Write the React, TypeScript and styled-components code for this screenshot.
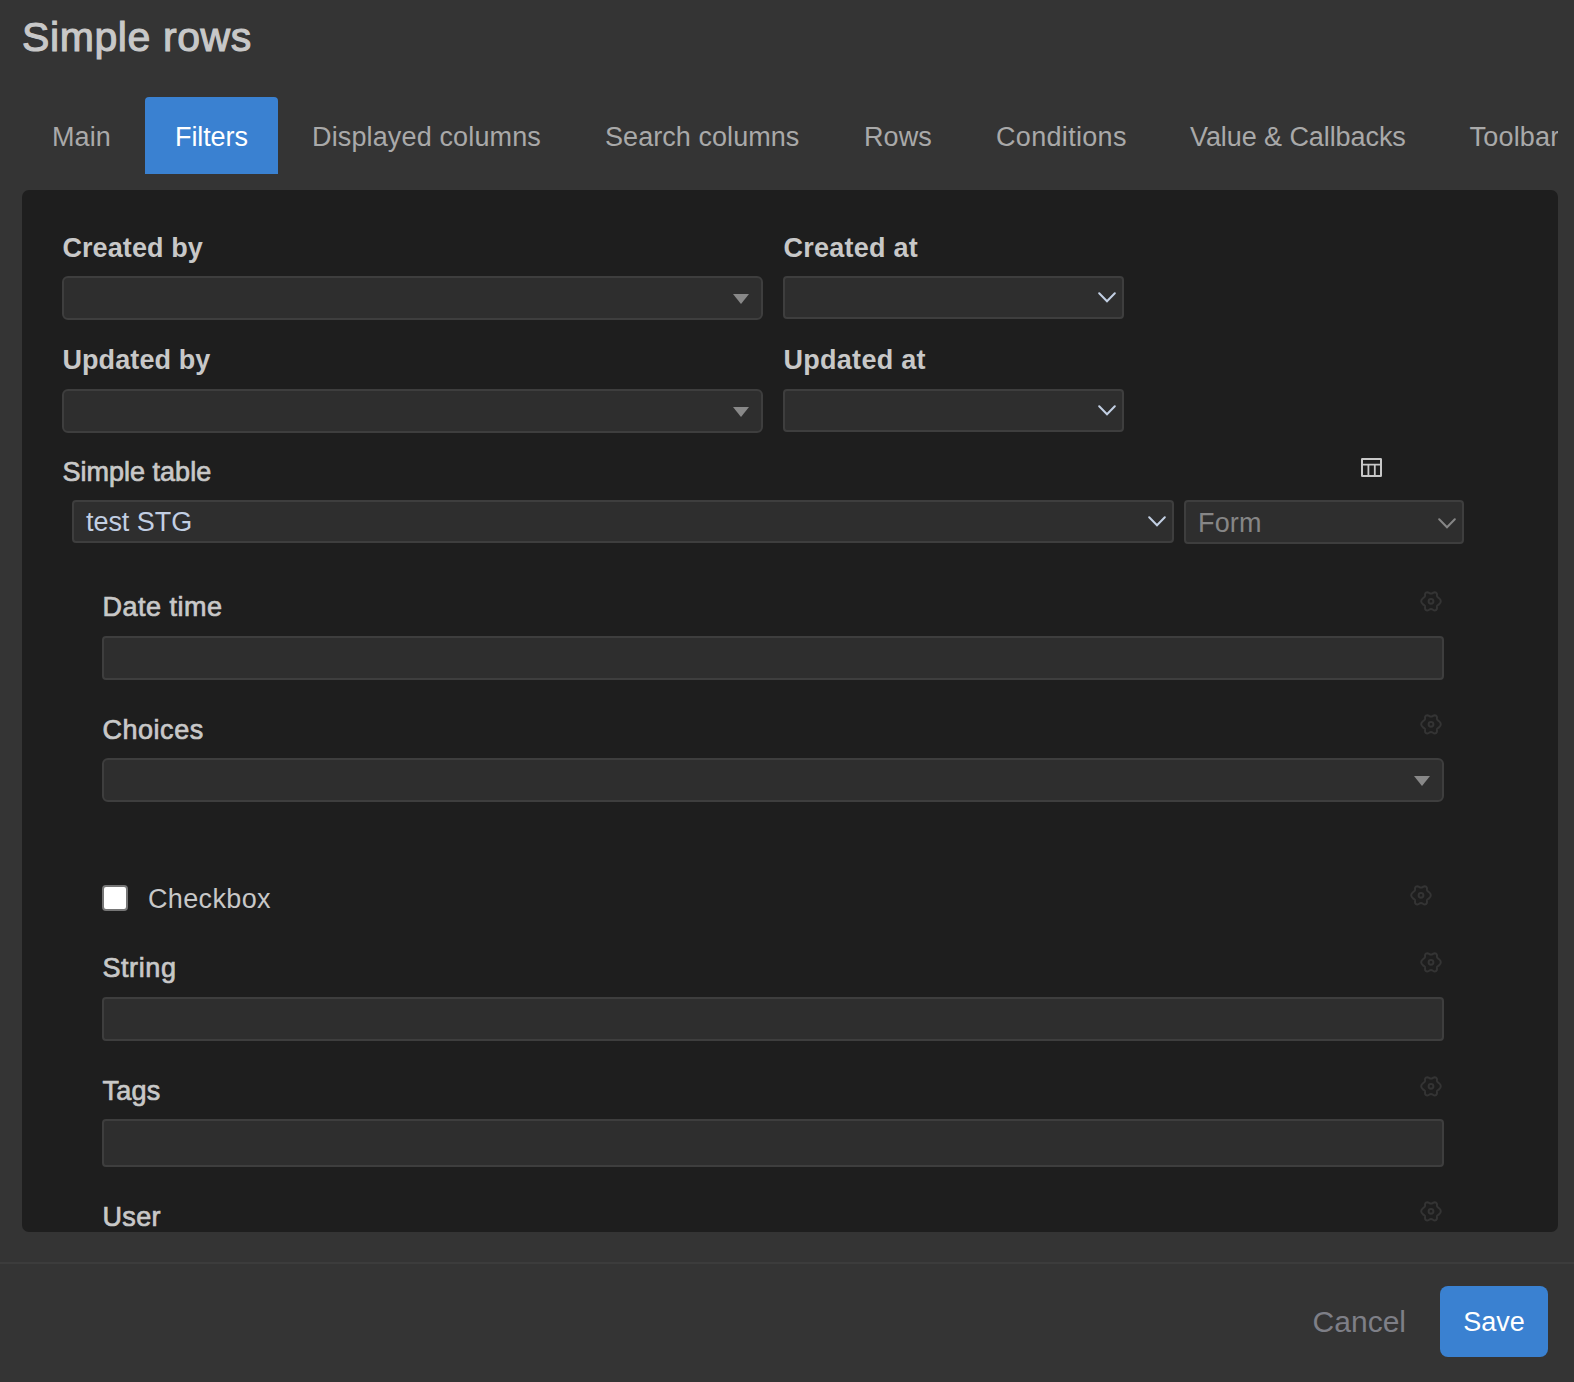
import React from "react";
import styled, { createGlobalStyle } from "styled-components";

const colors = {
  surface: "#343434",
  panel: "#1e1e1e",
  field: "#2e2e2e",
  border: "#3e3e3e",
  accent: "#3a81d1",
  label: "#c8c8c8",
  tab: "#a9a9a9",
  muted: "#868686",
  value: "#c2cfe3",
  gear: "#343434",
};

const GlobalStyle = createGlobalStyle`
  * { box-sizing: border-box; }
  body {
    margin: 0;
    background: ${colors.surface};
    font-family: "Liberation Sans", Arial, sans-serif;
    font-size: 27px;
    line-height: 32px;
    color: ${colors.label};
    overflow: hidden;
    -webkit-font-smoothing: antialiased;
  }
`;

const Dialog = styled.div`
  display: flex;
  flex-direction: column;
  width: 1574px;
  height: 1382px;
  background: ${colors.surface};
  overflow: hidden;
`;

const Title = styled.h1`
  margin: 0;
  padding: 13px 22px 0;
  height: 97px;
  font-size: 41px;
  line-height: 48px;
  font-weight: 400;
  letter-spacing: 0.6px;
  -webkit-text-stroke: 1.1px currentColor;
`;

const Tabs = styled.nav`
  display: flex;
  gap: 4px;
  height: 77px;
  margin: 0 16px 16px 22px;
  overflow: hidden;
  flex-shrink: 0;
`;

const Tab = styled.button<{ $active?: boolean; $width: number; $track?: number }>`
  flex: 0 0 auto;
  width: ${(p) => p.$width}px;
  padding: 3px 0 0 30px;
  border: 0;
  border-radius: 4px 4px 0 0;
  background: ${(p) => (p.$active ? colors.accent : "transparent")};
  color: ${(p) => (p.$active ? "#fff" : colors.tab)};
  font: inherit;
  text-align: left;
  white-space: nowrap;
  letter-spacing: ${(p) => p.$track ?? 0}px;
`;

const Panel = styled.main`
  display: flex;
  flex-direction: column;
  height: 1042px;
  margin: 0 16px 0 22px;
  padding: 42px 94px 0 40px;
  border-radius: 7px;
  background: ${colors.panel};
  overflow: hidden;
  flex-shrink: 0;
`;

const Row = styled.div<{ $top?: number }>`
  display: flex;
  align-items: flex-start;
  gap: 20px;
  margin-top: ${(p) => p.$top ?? 0}px;
  flex-shrink: 0;
`;

const Column = styled.div<{ $width: number }>`
  display: flex;
  flex-direction: column;
  width: ${(p) => p.$width}px;
`;

const LabelRow = styled.div<{ $bottom?: number }>`
  display: flex;
  align-items: flex-start;
  justify-content: space-between;
  height: 32px;
  margin-bottom: ${(p) => p.$bottom ?? 12}px;
`;

const Label = styled.label<{ $bold?: boolean; $track?: number }>`
  padding-left: 0.4px;
  font-weight: ${(p) => (p.$bold ? 700 : 400)};
  letter-spacing: ${(p) => p.$track ?? 0}px;
  -webkit-text-stroke: ${(p) => (p.$bold ? 0 : 0.7)}px currentColor;
  white-space: nowrap;
`;

const Field = styled.div<{ $height?: number; $radius?: number; $inset?: number; $disabled?: boolean }>`
  display: flex;
  align-items: center;
  justify-content: space-between;
  height: ${(p) => p.$height ?? 44}px;
  padding: ${(p) => (p.$disabled ? 2 : 0)}px ${(p) => p.$inset ?? 6}px 0 12px;
  border: 2px solid ${colors.border};
  border-radius: ${(p) => p.$radius ?? 4}px;
  background: ${colors.field};
  color: ${(p) => (p.$disabled ? colors.muted : colors.value)};
`;

const PickerField = styled(Field)`
  justify-content: flex-end;
  padding: 1.5px 12px 0;
  border-radius: 6px;
`;

const TableRow = styled.div`
  display: grid;
  grid-template-columns: 1102px 280px;
  gap: 10px;
  align-items: start;
  padding-left: 10px;
`;

const FieldGroup = styled.section<{ $top: number }>`
  display: flex;
  flex-direction: column;
  margin: ${(p) => p.$top}px 20px 0 40px;
  flex-shrink: 0;
`;

const CheckRow = styled.div`
  display: flex;
  align-items: flex-start;
  height: 32px;
  margin: 81px 30px 0 40px;
  flex-shrink: 0;
`;

const CheckInput = styled.input`
  appearance: none;
  width: 26px;
  height: 26px;
  margin: 2px 20px 0 0;
  border: 2px solid #767676;
  border-radius: 4px;
  background: #fff;
`;

const CheckLabel = styled.label`
  flex: 1;
  letter-spacing: 0.35px;
`;

const Value = styled.span<{ $track?: number }>`
  letter-spacing: ${(p) => p.$track ?? 0}px;
`;

const GearSvg = styled.svg<{ $drop?: number }>`
  display: block;
  margin: ${(p) => p.$drop ?? -2}px 1px 0 0;
`;

const GridSvg = styled.svg`
  display: block;
  margin: 2px 82px 0 0;
`;

const Footer = styled.footer`
  display: flex;
  justify-content: flex-end;
  align-items: flex-start;
  gap: 34px;
  height: 120px;
  margin-top: 30px;
  padding: 22px 26px 0 0;
  border-top: 2px solid #3c3c3c;
  flex-shrink: 0;
`;

const CancelButton = styled.button`
  height: 71px;
  padding: 0;
  border: 0;
  background: none;
  color: #7e7f87;
  font: inherit;
  font-size: 30px;
`;

const SaveButton = styled.button`
  width: 108px;
  height: 71px;
  padding: 0;
  border: 0;
  border-radius: 8px;
  background: ${colors.accent};
  color: #fff;
  font: inherit;
`;

const Chevron = () => (
  <svg width="18" height="11" viewBox="0 0 18 11" fill="none">
    <path d="M1.2 1.2 9 9.2 16.8 1.2" stroke="currentColor" strokeWidth="2" strokeLinecap="round" />
  </svg>
);

const Triangle = () => (
  <svg width="16" height="10" viewBox="0 0 16 10">
    <path d="M0 0H16L8 10Z" fill="#888" />
  </svg>
);

const Gear = ({ drop }: { drop?: number }) => (
  <GearSvg $drop={drop} width="24" height="24" viewBox="-12 -12.3 24 24" fill="none" stroke={colors.gear} strokeWidth="2" strokeLinejoin="round">
    <path d="M0 -7.7C1.8 -7.7 2 -9.1 3.8 -9.1C5.9 -8.9 6.2 -7.4 5.9 -5.6C5.7 -4.2 7 -3.9 8 -3.1C9.2 -2.2 9.8 -1 9.8 0C9.8 1 9.2 2.2 8 3.1C7 3.9 5.7 4.2 5.9 5.6C6.2 7.4 5.9 8.9 3.8 9.1C2 9.1 1.8 7.7 0 7.7C-1.8 7.7 -2 9.1 -3.8 9.1C-5.9 8.9 -6.2 7.4 -5.9 5.6C-5.7 4.2 -7 3.9 -8 3.1C-9.2 2.2 -9.8 1 -9.8 0C-9.8 -1 -9.2 -2.2 -8 -3.1C-7 -3.9 -5.7 -4.2 -5.9 -5.6C-6.2 -7.4 -5.9 -8.9 -3.8 -9.1C-2 -9.1 -1.8 -7.7 0 -7.7Z" />
    <circle r="2.4" />
  </GearSvg>
);

const TableIcon = () => (
  <GridSvg width="21" height="19" viewBox="0 0 21 19" fill="none" stroke={colors.label}>
    <rect x="1" y="1" width="19" height="17" rx="0.3" strokeWidth="2" />
    <path d="M1 6.6H20M7.4 6.6V18M13.8 6.6V18" strokeWidth="1.8" />
  </GridSvg>
);

const tabs = [
  { name: "Main", width: 119, track: 0.1 },
  { name: "Filters", width: 133, track: -0.1 },
  { name: "Displayed columns", width: 289, track: 0.14 },
  { name: "Search columns", width: 255, track: 0.06 },
  { name: "Rows", width: 128, track: 0.1 },
  { name: "Conditions", width: 190, track: 0.32 },
  { name: "Value & Callbacks", width: 275.5, track: -0.08 },
  { name: "Toolbar", width: 150, track: 0.2 },
];

export default function App() {
  return (
    <>
      <GlobalStyle />
      <Dialog>
        <Title>Simple rows</Title>
        <Tabs>
          {tabs.map((t) => (
            <Tab key={t.name} $active={t.name === "Filters"} $width={t.width} $track={t.track}>
              {t.name}
            </Tab>
          ))}
        </Tabs>

        <Panel>
          <Row>
            <Column $width={701}>
              <LabelRow><Label $bold $track={0.1}>Created by</Label></LabelRow>
              <PickerField><Triangle /></PickerField>
            </Column>
            <Column $width={341}>
              <LabelRow><Label $bold $track={0.25}>Created at</Label></LabelRow>
              <Field $height={43}><span /><Chevron /></Field>
            </Column>
          </Row>

          <Row $top={24}>
            <Column $width={701}>
              <LabelRow $bottom={13}><Label $bold $track={0.1}>Updated by</Label></LabelRow>
              <PickerField><Triangle /></PickerField>
            </Column>
            <Column $width={341}>
              <LabelRow $bottom={13}><Label $bold $track={0.3}>Updated at</Label></LabelRow>
              <Field $height={43}><span /><Chevron /></Field>
            </Column>
          </Row>

          <Row $top={23}>
            <Column $width={1402}>
              <LabelRow><Label $track={0.02}>Simple table</Label><TableIcon /></LabelRow>
              <TableRow>
                <Field $height={43}><Value $track={-0.05}>test STG</Value><Chevron /></Field>
                <Field $disabled><Value $track={0.15}>Form</Value><Chevron /></Field>
              </TableRow>
            </Column>
          </Row>

          <FieldGroup $top={47}>
            <LabelRow $bottom={13}><Label $track={0.5}>Date time</Label><Gear /></LabelRow>
            <Field />
          </FieldGroup>
          <FieldGroup $top={34}>
            <LabelRow><Label $track={0.55}>Choices</Label><Gear /></LabelRow>
            <PickerField><Triangle /></PickerField>
          </FieldGroup>

          <CheckRow>
            <CheckInput type="checkbox" id="checkbox" />
            <CheckLabel htmlFor="checkbox">Checkbox</CheckLabel>
            <Gear drop={0} />
          </CheckRow>

          <FieldGroup $top={37}>
            <LabelRow $bottom={13}><Label $track={0.6}>String</Label><Gear /></LabelRow>
            <Field />
          </FieldGroup>
          <FieldGroup $top={34}>
            <LabelRow><Label $track={0.3}>Tags</Label><Gear drop={-1.5} /></LabelRow>
            <Field $height={48} />
          </FieldGroup>
          <FieldGroup $top={34}>
            <LabelRow><Label $track={0.4}>User</Label><Gear /></LabelRow>
            <Field />
          </FieldGroup>
        </Panel>

        <Footer>
          <CancelButton>Cancel</CancelButton>
          <SaveButton>Save</SaveButton>
        </Footer>
      </Dialog>
    </>
  );
}
